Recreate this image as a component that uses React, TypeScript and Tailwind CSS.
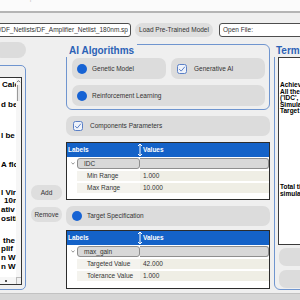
import React from "react";

const Radio = () => <span className="block w-[10px] h-[10px] rounded-full bg-[#1763d4] shrink-0" />;

const Check = () => (
  <svg width="10" height="10" viewBox="0 0 10 10" className="shrink-0">
    <rect x="0.5" y="0.5" width="9" height="9" rx="2" fill="#eef2fa" stroke="#5b80c6" />
    <path d="M2.2 5.1 L4.2 7.1 L7.9 2.7" fill="none" stroke="#5b80c6" strokeWidth="1" />
  </svg>
);

const Splitter = () => (
  <svg width="6" height="14" viewBox="0 0 6 14" className="shrink-0">
    <path d="M3 1 V13" stroke="#ffffff" strokeWidth="1" />
    <path d="M1 3 L3 1 L5 3" fill="none" stroke="#ffffff" strokeWidth="1" />
    <path d="M1 11 L3 13 L5 11" fill="none" stroke="#ffffff" strokeWidth="1" />
  </svg>
);

const Chevron = () => (
  <svg width="4" height="3" viewBox="0 0 4 3" className="shrink-0">
    <path d="M0.5 0.5 L2 2.2 L3.5 0.5" fill="none" stroke="#7a7a7a" strokeWidth="0.8" />
  </svg>
);

function ParamTable({
  group,
  rows,
  heightClass,
  marginClass,
}: {
  group: string;
  rows: [string, string][];
  heightClass: string;
  marginClass: string;
}) {
  return (
    <div className={`${marginClass} ${heightClass} shrink-0 border border-[#2c2c2c] bg-white flex flex-col text-[6.5px] text-[#333]`}>
      <div className="h-[14px] shrink-0 bg-[#1462c8] flex items-center text-white font-bold">
        <div className="w-[70px] pl-[1px]">Labels</div>
        <Splitter />
        <div>Values</div>
      </div>
      <div className="mt-[1px] h-[11px] flex items-center">
        <div className="w-[10px] h-full flex items-center pl-[4px]">
          <Chevron />
        </div>
        <div className="w-[63px] h-full flex items-center border border-[#8e8e8e] rounded-[3px] bg-[#d8d8d8] pl-[6px]">{group}</div>
        <div className="flex-1 h-full border border-l-0 border-[#8e8e8e] rounded-r-[3px] bg-[#d8d8d8]" />
      </div>
      {rows.map(([label, value]) => (
        <div key={label} className="mt-[2px] h-[10px] flex items-center">
          <div className="ml-[10px] w-[63px] h-full flex items-center bg-[#f4f3ee] pl-[10px]">{label}</div>
          <div className="flex-1 h-full flex items-center bg-[#efeee5] pl-[3px]">{value}</div>
        </div>
      ))}
    </div>
  );
}

const leftLines: [string, string][] = [
  ["Calc", "mt-[2.6px] pl-[1px]"],
  ["d be", "mt-[11.2px]"],
  ["l be", "mt-[22.2px]"],
  ["A flo", "mt-[20.2px]"],
  ["l Vir", "mt-[19.2px]"],
  ["10n", "pl-[3px]"],
  ["ativ", ""],
  ["ositi", ""],
  ["the", "mt-[12.8px] pl-[2px]"],
  ["plif", ""],
  ["n W", ""],
  ["n W", ""],
];

export default function App() {
  return (
    <div className="w-[300px] h-[300px] overflow-hidden bg-[#efefef] flex flex-col font-['Liberation_Sans',Arial,sans-serif] text-[#2a2a2a]">
      {/* top strip */}
      <div className="h-[13px] shrink-0 bg-[#fbfbfb] border-b-2 border-[#b4b4b4] overflow-hidden">
        <div className="-mt-[6px] pl-[3px] text-[7px] leading-[8px] text-[#cacaca] whitespace-nowrap">Netlist Optimizer</div>
      </div>

      {/* file row */}
      <div className="mt-[10px] h-[14px] shrink-0 flex text-[6.5px] text-[#333]">
        <div className="-ml-[4px] w-[135px] shrink-0 flex items-center justify-end overflow-hidden whitespace-nowrap border border-[#4d4d4d] rounded-[3px] bg-white pr-[2px]">
          /DF_Netlists/DF_Amplifier_Netlist_180nm.sp
        </div>
        <div className="ml-[4px] w-[78px] shrink-0 flex items-center justify-center rounded-[7px] bg-[#dedede] whitespace-nowrap">
          Load Pre-Trained Model
        </div>
        <div className="ml-[6px] w-[100px] shrink-0 flex items-center border border-[#4d4d4d] rounded-[3px] bg-white pl-[3px]">
          Open File:
        </div>
      </div>

      {/* main */}
      <div className="h-[256px] shrink-0 flex items-start">
        {/* left column */}
        <div className="w-[26px] shrink-0 flex flex-col">
          <div className="mt-[5px] -ml-[6px] w-[32px] h-[16px] rounded-[8px] bg-[#dcdcdc]" />
          <div className="mt-[7px] -ml-[6px] w-[32px] h-[225px] border border-[#6f95cf] rounded-[5px] pt-[11px] pr-[3px] flex flex-col">
            <div className="h-[208px] border border-[#333] bg-white flex flex-col">
              <div className="flex-1 flex min-h-0">
                <div className="flex-1 overflow-hidden pl-[5px] text-[8px] leading-[8.8px] font-bold text-black whitespace-nowrap">
                  {leftLines.map(([t, c], i) => (
                    <div key={i} className={c}>{t}</div>
                  ))}
                </div>
                <div className="w-[5px] shrink-0 bg-[#f6f6f6] flex flex-col items-center">
                  <svg width="5" height="5" viewBox="0 0 5 5" className="mt-[1px]">
                    <path d="M1 3.2 L2.5 1.6 L4 3.2" fill="none" stroke="#555" strokeWidth="0.8" />
                  </svg>
                  <div className="mt-[1px] w-[3px] h-[16px] border-l border-[#9a9a9a] bg-[#e9e9e9]" />
                </div>
              </div>
              <div className="h-[7px] shrink-0 flex items-center bg-[#f6f6f6]">
                <div className="flex-1 flex justify-center">
                  <span className="block w-[2px] h-[2px] bg-[#555]" />
                </div>
                <div className="w-[5px] h-full border-l border-t border-[#bbb] bg-[#f0f0f0]" />
              </div>
            </div>
          </div>
        </div>

        {/* add/remove column */}
        <div className="w-[40px] shrink-0 flex flex-col pl-[5px] text-[6.5px] text-[#333]">
          <div className="mt-[148px] w-[31px] h-[15px] rounded-[7px] bg-[#dedede] flex items-center justify-center">Add</div>
          <div className="mt-[7px] w-[31px] h-[15px] rounded-[7px] bg-[#dedede] flex items-center justify-center">Remove</div>
        </div>

        {/* center column */}
        <div className="w-[204px] shrink-0 flex flex-col text-[6.5px] text-[#333]">
          <div className="relative mt-[7px] h-[66px] border border-[#6f95cf] rounded-[6px] pt-[13px] pl-[5px] pr-[4px]">
            <div className="absolute -left-[1px] -top-[3px] w-[71px] h-[15px] bg-[#efefef] pl-[3px] pt-[3px] text-[10px] leading-[12px] font-bold text-[#2c62b6] whitespace-nowrap">
              AI Algorithms
            </div>
            <div className="flex gap-[5px] h-[21px]">
              <div className="w-[94px] h-full rounded-[7px] bg-[#dcdcdc] flex items-center pl-[5px] gap-[5px]">
                <Radio />
                <span>Genetic Model</span>
              </div>
              <div className="w-[94px] h-full rounded-[7px] bg-[#dcdcdc] flex items-center pl-[6px] gap-[7px]">
                <Check />
                <span>Generative AI</span>
              </div>
            </div>
            <div className="mt-[6px] h-[21px] rounded-[7px] bg-[#dcdcdc] flex items-center pl-[5px] gap-[5px]">
              <Radio />
              <span>Reinforcement Learning</span>
            </div>
          </div>

          <div className="mt-[6px] h-[20px] rounded-[7px] bg-[#dcdcdc] flex items-center pl-[7px] gap-[7px]">
            <Check />
            <span>Components Parameters</span>
          </div>

          <ParamTable
            group="IDC"
            rows={[
              ["Min Range", "1.000"],
              ["Max Range", "10.000"],
            ]}
            heightClass="h-[58px]"
            marginClass="mt-[6px]"
          />

          <div className="mt-[6px] h-[20px] rounded-[7px] bg-[#dcdcdc] flex items-center pl-[6px] gap-[5px]">
            <Radio />
            <span>Target Specification</span>
          </div>

          <ParamTable
            group="max_gain"
            rows={[
              ["Targeted Value", "42.000"],
              ["Tolerance Value", "1.000"],
            ]}
            heightClass="h-[59px]"
            marginClass="mt-[4px]"
          />
        </div>

        {/* right column */}
        <div className="ml-[4px] w-[60px] shrink-0 relative mt-[7px] h-[246px] border border-[#6f95cf] rounded-[6px] pt-[12px] pl-[3px] flex flex-col">
          <div className="absolute -left-[1px] -top-[3px] w-[60px] h-[15px] bg-[#efefef] pl-[2px] pt-[3px] text-[10px] leading-[12px] font-bold text-[#2c62b6] whitespace-nowrap">
            Terminal
          </div>
          <div className="h-[188px] shrink-0 border border-[#3a3a3a] bg-white pl-[1px] text-[6.5px] leading-[6.6px] font-bold text-black whitespace-nowrap overflow-hidden">
            <div className="mt-[24px]">Achieved target</div>
            <div>All the parameters</div>
            <div>('IDC', 12.5)</div>
            <div>Simulation count</div>
            <div>Target gain</div>
            <div className="mt-[69px]">Total time for</div>
            <div>simulation</div>
          </div>
          <div className="mt-[3px] ml-[1px] h-[18px] shrink-0 rounded-[7px] bg-[#dcdcdc]" />
          <div className="mt-[4px] ml-[1px] h-[18px] shrink-0 rounded-[7px] bg-[#dcdcdc]" />
        </div>
      </div>

      {/* bottom strip */}
      <div className="flex-1 bg-[#d6d6d6] border-t border-[#c2c2c2]" />
    </div>
  );
}
